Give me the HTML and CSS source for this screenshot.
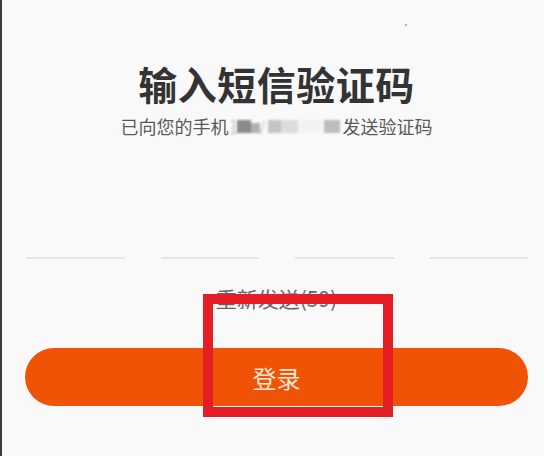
FILE: index.html
```html
<!DOCTYPE html>
<html lang="zh-CN">
<head>
<meta charset="utf-8">
<title>输入短信验证码</title>
<link rel="stylesheet" href="styles.css">
</head>
<body>
<div class="screen">
  <span class="speck"></span>
  <div class="content">
    <h1 class="title">输入短信验证码</h1>
    <p class="subtitle">已向您的手机<span class="phone"><span class="d1">1</span><span class="b b1"></span><span class="b b2"></span><span class="slash">/</span><span class="b b3"></span><span class="b b4"></span><span class="b b5"></span><span class="b b6"></span></span>发送验证码</p>
    <div class="code-row">
      <div class="code-cell"></div>
      <div class="code-cell"></div>
      <div class="code-cell"></div>
      <div class="code-cell"></div>
    </div>
    <p class="resend">重新发送(59)</p>
    <button class="login" type="button">登录</button>
  </div>
  <div class="highlight"></div>
</div>
</body>
</html>
```

FILE: styles.css
```css
html, body {
  margin: 0;
  padding: 0;
  background: #f9f9fa;
}

body {
  font-family: "Noto Sans CJK SC", "Noto Sans", sans-serif;
}

.screen {
  position: relative;
  width: 544px;
  height: 456px;
  box-sizing: border-box;
  border-left: 2px solid #3a3a3c;
  background: #f9f9fa;
  overflow: hidden;
}

.speck {
  position: absolute;
  left: 403px;
  top: 24px;
  width: 2px;
  height: 2px;
  background: #9a9a9a;
  border-radius: 50%;
}

.content {
  display: flex;
  flex-direction: column;
  align-items: center;
  padding: 59px 16px 0 23px;
}

.title {
  margin: 0;
  font-size: 39px;
  line-height: 48px;
  font-weight: 700;
  color: #333333;
  letter-spacing: 0.5px;
}

.subtitle {
  margin: 7px 0 0;
  font-size: 18px;
  line-height: 24px;
  color: #5a5a5a;
  display: flex;
  align-items: center;
}

.phone {
  display: inline-flex;
  align-items: center;
  width: 114px;
  height: 20px;
  filter: blur(0.8px);
}

.d1 {
  color: #c8c8c8;
  width: 8px;
}

.b {
  display: inline-block;
  height: 13px;
}

.b1 { width: 14px; background: #8a8a8a; }
.b2 { width: 9px; height: 10px; background: #b0b0b0; margin-top: 3px; }
.slash { color: #c0c0c0; width: 6px; font-size: 14px; }
.b3 { width: 13px; background: #c4c4c4; margin-left: 2px; }
.b4 { width: 17px; background: #dcdcdc; }
.b5 { width: 24px; background: #f2f2f2; }
.b6 { width: 16px; background: #bdbdbd; margin-left: 2px; }

.code-row {
  align-self: stretch;
  display: flex;
  gap: 36px;
  margin-top: 119px;
  padding-left: 1px;
}

.code-cell {
  flex: 1;
  height: 2px;
  background: #e6e6e6;
}

.resend {
  margin: 25px 0 0;
  font-size: 21px;
  line-height: 28px;
  color: #666666;
}

.login {
  align-self: stretch;
  margin-top: 36px;
  height: 58px;
  border: none;
  border-radius: 29px;
  background: #f05206;
  color: #fde8d2;
  font-family: "Noto Sans CJK SC", "Noto Sans", sans-serif;
  font-size: 24px;
  padding: 0;
}

.highlight {
  position: absolute;
  left: 201px;
  top: 294px;
  width: 190px;
  height: 123px;
  box-sizing: border-box;
  border: 10px solid #e31e24;
}
```
